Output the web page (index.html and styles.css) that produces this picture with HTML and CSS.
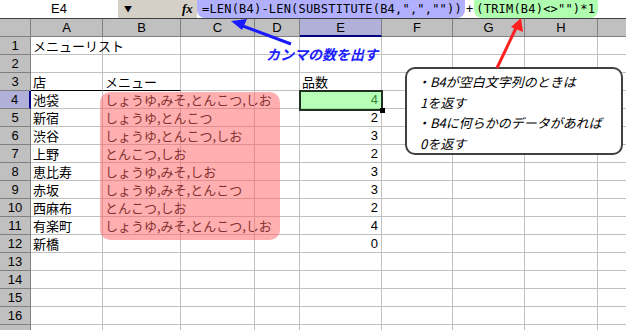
FILE: index.html
```html
<!DOCTYPE html>
<html lang="ja">
<head>
    <meta charset="UTF-8">
    <title>メニューリスト</title>
    <link rel="stylesheet" href="styles.css">
</head>
<body>
    <div class="screen">
        <!-- formula bar -->
        <div class="formula-bar">
            <div class="name-box">E4</div>
            <div class="name-drop">&#9660;</div>
            <div class="fx">fx</div>
            <div class="formula"><span class="hl-blue">=LEN(B4)-LEN(SUBSTITUTE(B4,&quot;,&quot;,&quot;&quot;))</span><span class="plus">+</span><span class="hl-green">(TRIM(B4)&lt;&gt;&quot;&quot;)*1</span></div>
        </div>

        <!-- sheet grid -->
        <div class="sheet">
            <div class="corner"></div>
            <div class="col-head">A</div>
            <div class="col-head">B</div>
            <div class="col-head">C</div>
            <div class="col-head">D</div>
            <div class="col-head active">E</div>
            <div class="col-head">F</div>
            <div class="col-head">G</div>
            <div class="col-head">H</div>
            <div class="col-head"></div>

            <div class="row-head">1</div><div class="cell">メニューリスト</div><div class="cell"></div><div class="cell"></div><div class="cell"></div><div class="cell"></div><div class="cell"></div><div class="cell"></div><div class="cell"></div><div class="cell"></div>
            <div class="row-head">2</div><div class="cell"></div><div class="cell"></div><div class="cell"></div><div class="cell"></div><div class="cell"></div><div class="cell"></div><div class="cell"></div><div class="cell"></div><div class="cell"></div>
            <div class="row-head">3</div><div class="cell under">店</div><div class="cell under">メニュー</div><div class="cell"></div><div class="cell"></div><div class="cell">品数</div><div class="cell"></div><div class="cell"></div><div class="cell"></div><div class="cell"></div>
            <div class="row-head active">4</div><div class="cell">池袋</div><div class="cell">しょうゆ,みそ,とんこつ,しお</div><div class="cell"></div><div class="cell"></div><div class="cell num">4</div><div class="cell"></div><div class="cell"></div><div class="cell"></div><div class="cell"></div>
            <div class="row-head">5</div><div class="cell">新宿</div><div class="cell">しょうゆ,とんこつ</div><div class="cell"></div><div class="cell"></div><div class="cell num">2</div><div class="cell"></div><div class="cell"></div><div class="cell"></div><div class="cell"></div>
            <div class="row-head">6</div><div class="cell">渋谷</div><div class="cell">しょうゆ,とんこつ,しお</div><div class="cell"></div><div class="cell"></div><div class="cell num">3</div><div class="cell"></div><div class="cell"></div><div class="cell"></div><div class="cell"></div>
            <div class="row-head">7</div><div class="cell">上野</div><div class="cell">とんこつ,しお</div><div class="cell"></div><div class="cell"></div><div class="cell num">2</div><div class="cell"></div><div class="cell"></div><div class="cell"></div><div class="cell"></div>
            <div class="row-head">8</div><div class="cell">恵比寿</div><div class="cell">しょうゆ,みそ,しお</div><div class="cell"></div><div class="cell"></div><div class="cell num">3</div><div class="cell"></div><div class="cell"></div><div class="cell"></div><div class="cell"></div>
            <div class="row-head">9</div><div class="cell">赤坂</div><div class="cell">しょうゆ,みそ,とんこつ</div><div class="cell"></div><div class="cell"></div><div class="cell num">3</div><div class="cell"></div><div class="cell"></div><div class="cell"></div><div class="cell"></div>
            <div class="row-head">10</div><div class="cell">西麻布</div><div class="cell">とんこつ,しお</div><div class="cell"></div><div class="cell"></div><div class="cell num">2</div><div class="cell"></div><div class="cell"></div><div class="cell"></div><div class="cell"></div>
            <div class="row-head">11</div><div class="cell">有楽町</div><div class="cell">しょうゆ,みそ,とんこつ,しお</div><div class="cell"></div><div class="cell"></div><div class="cell num">4</div><div class="cell"></div><div class="cell"></div><div class="cell"></div><div class="cell"></div>
            <div class="row-head">12</div><div class="cell">新橋</div><div class="cell"></div><div class="cell"></div><div class="cell"></div><div class="cell num">0</div><div class="cell"></div><div class="cell"></div><div class="cell"></div><div class="cell"></div>
            <div class="row-head">13</div><div class="cell"></div><div class="cell"></div><div class="cell"></div><div class="cell"></div><div class="cell"></div><div class="cell"></div><div class="cell"></div><div class="cell"></div><div class="cell"></div>
            <div class="row-head">14</div><div class="cell"></div><div class="cell"></div><div class="cell"></div><div class="cell"></div><div class="cell"></div><div class="cell"></div><div class="cell"></div><div class="cell"></div><div class="cell"></div>
            <div class="row-head">15</div><div class="cell"></div><div class="cell"></div><div class="cell"></div><div class="cell"></div><div class="cell"></div><div class="cell"></div><div class="cell"></div><div class="cell"></div><div class="cell"></div>
            <div class="row-head">16</div><div class="cell"></div><div class="cell"></div><div class="cell"></div><div class="cell"></div><div class="cell"></div><div class="cell"></div><div class="cell"></div><div class="cell"></div><div class="cell"></div>
            <div class="row-head"></div><div class="cell"></div><div class="cell"></div><div class="cell"></div><div class="cell"></div><div class="cell"></div><div class="cell"></div><div class="cell"></div><div class="cell"></div><div class="cell"></div>
        </div>

        <!-- annotations drawn over the sheet -->
        <div class="mark-menu"></div>
        <div class="mark-count"><span class="fill-handle"></span></div>

        <div class="note-comma">カンマの数を出す</div>

        <div class="callout">
            <p>・B4が空白文字列のときは</p>
            <p>&nbsp;1を返す</p>
            <p>・B4に何らかのデータがあれば</p>
            <p>&nbsp;0を返す</p>
        </div>

        <svg class="arrows" width="626" height="330" viewBox="0 0 626 330">
            <line x1="291" y1="44" x2="240" y2="25" stroke="#1a1aff" stroke-width="3"/>
            <polygon points="231,21 247,19 242,30" fill="#1a1aff"/>
            <line x1="497" y1="68" x2="516" y2="28" stroke="#ff2020" stroke-width="3"/>
            <polygon points="521,18 523,32 511,27" fill="#ff2020"/>
        </svg>
    </div>
</body>
</html>
```

FILE: styles.css
```css
:root {
    --grid-line: #c0c0c0;
    --head-bg: #c0c0c0;
    --head-line: #808080;
    --active-head: #b0b0d8;
    --active-line: #000080;
}

* {
    box-sizing: border-box;
}

body {
    margin: 0;
    background: #ffffff;
    font-family: "Noto Sans CJK JP", "Liberation Sans", sans-serif;
    font-size: 13px;
    color: #000;
    overflow: hidden;
}

.screen {
    position: relative;
    width: 626px;
    height: 330px;
    overflow: hidden;
}

/* top formula bar */
.formula-bar {
    display: flex;
    height: 19px;
    background: #d4d0c8;
    border-bottom: 1px solid #404040;
}

.name-box {
    width: 118px;
    background: #fff;
    font-family: "Liberation Sans", sans-serif;
    line-height: 18px;
    padding-left: 51px;
}

.name-drop {
    width: 56px;
    font-size: 8px;
    line-height: 18px;
    padding-left: 6px;
}

.fx {
    width: 23px;
    font-family: "Liberation Serif", serif;
    font-style: italic;
    font-weight: bold;
    font-size: 13px;
    line-height: 18px;
    padding-left: 8px;
}

.formula {
    flex: 1;
    display: flex;
    align-items: flex-start;
    background: #fff;
    font-family: "DejaVu Sans Mono", monospace;
    font-size: 12px;
    line-height: 18px;
    letter-spacing: 0.2px;
    white-space: nowrap;
}

.hl-blue {
    background: #b0b0ff;
    padding: 0 3px 0 5px;
    border-radius: 0 0 8px 8px;
}

.plus {
    padding: 0 1px;
}

.hl-green {
    background: #b0ffb0;
    padding: 0 3px 0 2px;
    border-radius: 0 0 8px 8px;
}

/* sheet */
.sheet {
    display: grid;
    grid-template-columns: 31px 72px 78px 74px 45px 82px 71px 72px 73px 40px;
    grid-auto-rows: 18px;
}

.corner,
.col-head,
.row-head {
    background: var(--head-bg);
    border-right: 1px solid var(--head-line);
    border-bottom: 1px solid var(--head-line);
    font-family: "Liberation Sans", sans-serif;
    text-align: center;
    line-height: 17px;
}

.col-head.active {
    background: var(--active-head);
    border-bottom: 2px solid var(--active-line);
}

.row-head.active {
    background: var(--active-head);
    border-right: 2px solid var(--active-line);
}

.cell {
    border-right: 1px solid var(--grid-line);
    border-bottom: 1px solid var(--grid-line);
    padding: 0 2px;
    line-height: 17px;
    white-space: nowrap;
    position: relative;
}

.cell.under {
    border-bottom: 1px solid #000;
}

.cell.num {
    text-align: right;
    padding-right: 3px;
    font-family: "Liberation Sans", sans-serif;
}

/* overlays */
.mark-menu {
    position: absolute;
    left: 100px;
    top: 92px;
    width: 180px;
    height: 148px;
    border-radius: 10px;
    background: rgba(255, 96, 96, 0.5);
}

.mark-count {
    position: absolute;
    left: 299px;
    top: 90px;
    width: 84px;
    height: 21px;
    border: 2px solid #203020;
    background: rgba(112, 255, 112, 0.5);
}

.fill-handle {
    position: absolute;
    right: -4px;
    bottom: -4px;
    width: 5px;
    height: 5px;
    background: #000;
}

.note-comma {
    position: absolute;
    left: 266px;
    top: 45px;
    color: #2020ff;
    font-weight: bold;
    font-style: italic;
    font-size: 14px;
    line-height: 18px;
}

.callout {
    position: absolute;
    left: 405px;
    top: 67px;
    width: 218px;
    height: 88px;
    padding: 3px 0 0 10px;
    background: #fff;
    border: 2px solid #404040;
    border-radius: 10px;
    font-style: italic;
    font-size: 13px;
}

.callout p {
    margin: 0;
    line-height: 20.5px;
}

.arrows {
    position: absolute;
    left: 0;
    top: 0;
    pointer-events: none;
}
```
